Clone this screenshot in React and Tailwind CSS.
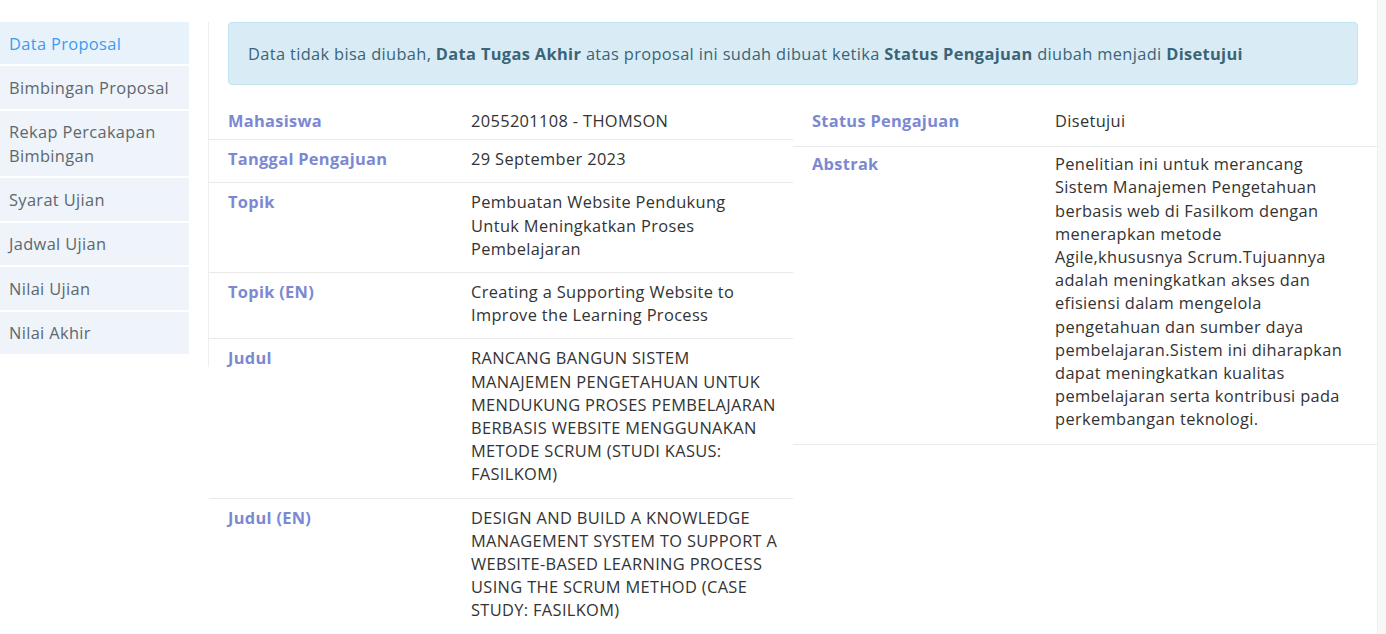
import React from 'react';

const menu = [
    { label: ['Data Proposal'], active: true },
    { label: ['Bimbingan Proposal'] },
    { label: ['Rekap Percakapan', 'Bimbingan'] },
    { label: ['Syarat Ujian'] },
    { label: ['Jadwal Ujian'] },
    { label: ['Nilai Ujian'] },
    { label: ['Nilai Akhir'] },
];

const leftRows = [
    { label: 'Mahasiswa', value: ['2055201108 - THOMSON'], first: true },
    { label: 'Tanggal Pengajuan', value: ['29 September 2023'] },
    {
        label: 'Topik',
        value: ['Pembuatan Website Pendukung', 'Untuk Meningkatkan Proses', 'Pembelajaran'],
    },
    {
        label: 'Topik (EN)',
        value: ['Creating a Supporting Website to', 'Improve the Learning Process'],
    },
    {
        label: 'Judul',
        value: [
            'RANCANG BANGUN SISTEM',
            'MANAJEMEN PENGETAHUAN UNTUK',
            'MENDUKUNG PROSES PEMBELAJARAN',
            'BERBASIS WEBSITE MENGGUNAKAN',
            'METODE SCRUM (STUDI KASUS:',
            'FASILKOM)',
        ],
    },
    {
        label: 'Judul (EN)',
        value: [
            'DESIGN AND BUILD A KNOWLEDGE',
            'MANAGEMENT SYSTEM TO SUPPORT A',
            'WEBSITE-BASED LEARNING PROCESS',
            'USING THE SCRUM METHOD (CASE',
            'STUDY: FASILKOM)',
        ],
    },
];

const abstrak = [
    'Penelitian ini untuk merancang',
    'Sistem Manajemen Pengetahuan',
    'berbasis web di Fasilkom dengan',
    'menerapkan metode',
    'Agile,khususnya Scrum.Tujuannya',
    'adalah meningkatkan akses dan',
    'efisiensi dalam mengelola',
    'pengetahuan dan sumber daya',
    'pembelajaran.Sistem ini diharapkan',
    'dapat meningkatkan kualitas',
    'pembelajaran serta kontribusi pada',
    'perkembangan teknologi.',
];

const Lines = ({ lines }) => (
    <div className="text-[#333333]">
        {lines.map((l) => (
            <div key={l} className="whitespace-nowrap">{l}</div>
        ))}
    </div>
);

const Label = ({ children }) => (
    <div className="font-bold text-[#7c88d2] tracking-[0.3px]">{children}</div>
);

export default function App() {
    return (
        <div
            className="min-h-screen bg-white flex text-[16.4px] leading-[23.2px] tracking-[0.35px]"
            style={{ fontFamily: '"Open Sans", "Liberation Sans", sans-serif' }}
        >
            <div className="flex-1 flex pt-[22px]">
                {/* sidebar */}
                <div className="w-[209px] shrink-0 self-start pr-[19px] pb-[13px] border-r border-[#eeeeee]">
                    <div className="flex flex-col gap-[2px]">
                        {menu.map((m) => (
                            <div
                                key={m.label[0]}
                                className={`px-[9px] py-[9.6px] ${
                                    m.active
                                        ? 'bg-[#e8f2fa] text-[#3a9cf2]'
                                        : 'bg-[#eef4f9] text-[#5d6770]'
                                }`}
                            >
                                {m.label.map((l) => (
                                    <div key={l} className="whitespace-nowrap">{l}</div>
                                ))}
                            </div>
                        ))}
                    </div>
                </div>

                {/* content */}
                <div className="w-[1168px] shrink-0">
                    <div className="mx-[19px] h-[63px] rounded-[4px] border border-[#bfe5f0] bg-[#d9ecf5] text-[#3a6478] px-[19px] flex items-center">
                        <span className="whitespace-nowrap">
                            Data tidak bisa diubah, <b>Data Tugas Akhir</b> atas proposal ini sudah dibuat
                            ketika <b>Status Pengajuan</b> diubah menjadi <b>Disetujui</b>
                        </span>
                    </div>

                    <div className="mt-[18px] grid grid-cols-2">
                        <div>
                            {leftRows.map((r) => (
                                <div
                                    key={r.label}
                                    className={`grid grid-cols-[262px_1fr] ${
                                        r.first
                                            ? 'pt-[6px] pb-[7px]'
                                            : 'border-t border-[#e9e9e9] pt-[7px] pb-[12px]'
                                    }`}
                                >
                                    <div className="pl-[19px]">
                                        <Label>{r.label}</Label>
                                    </div>
                                    <Lines lines={r.value} />
                                </div>
                            ))}
                            <div className="border-t border-[#e9e9e9]" />
                        </div>

                        <div>
                            <div className="grid grid-cols-[262px_1fr] pt-[6px] pb-[14px]">
                                <div className="pl-[19px]">
                                    <Label>Status Pengajuan</Label>
                                </div>
                                <Lines lines={['Disetujui']} />
                            </div>
                            <div className="grid grid-cols-[262px_1fr] border-t border-b border-[#e9e9e9] pt-[5px] pb-[13px]">
                                <div className="pl-[19px]">
                                    <Label>Abstrak</Label>
                                </div>
                                <Lines lines={abstrak} />
                            </div>
                        </div>
                    </div>
                </div>
            </div>

            {/* scrollbar track */}
            <div className="w-[17px] shrink-0 bg-[#f7f7f7] border-l border-[#efefef]" />
        </div>
    );
}
